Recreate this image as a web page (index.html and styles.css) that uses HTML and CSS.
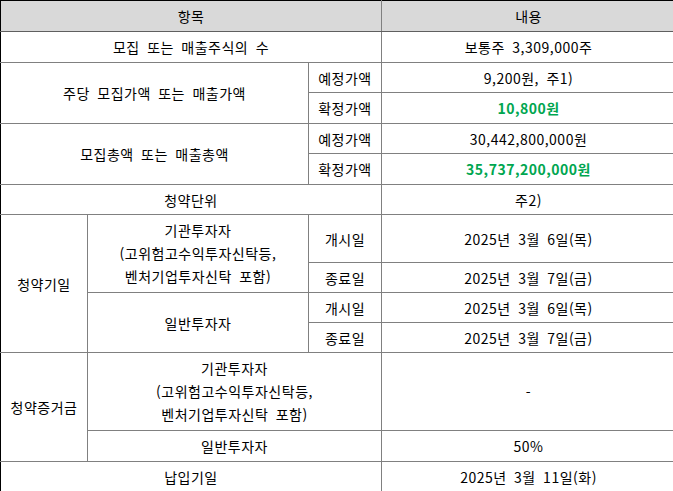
FILE: index.html
```html
<!DOCTYPE html>
<html lang="ko">
<head>
<meta charset="utf-8">
<link rel="stylesheet" href="styles.css">
</head>
<body>
<div class="wrap">
<table class="info">
  <colgroup>
    <col class="c1"><col class="c2"><col class="c3"><col class="c4">
  </colgroup>
  <tr class="h31 head">
    <th colspan="3">항목</th>
    <th>내용</th>
  </tr>
  <tr class="h31">
    <td colspan="3">모집 또는 매출주식의 수</td>
    <td>보통주 3,309,000주</td>
  </tr>
  <tr class="h30">
    <td colspan="2" rowspan="2">주당 모집가액 또는 매출가액</td>
    <td>예정가액</td>
    <td>9,200원, 주1)</td>
  </tr>
  <tr class="h31">
    <td>확정가액</td>
    <td class="green">10,800원</td>
  </tr>
  <tr class="h30">
    <td colspan="2" rowspan="2">모집총액 또는 매출총액</td>
    <td>예정가액</td>
    <td>30,442,800,000원</td>
  </tr>
  <tr class="h31">
    <td>확정가액</td>
    <td class="green">35,737,200,000원</td>
  </tr>
  <tr class="h30">
    <td colspan="3">청약단위</td>
    <td>주2)</td>
  </tr>
  <tr class="h48">
    <td rowspan="4">청약기일</td>
    <td rowspan="2" class="multi">기관투자자<br>(고위험고수익투자신탁등,<br>벤처기업투자신탁 포함)</td>
    <td>개시일</td>
    <td>2025년 3월 6일(목)</td>
  </tr>
  <tr class="h30">
    <td>종료일</td>
    <td>2025년 3월 7일(금)</td>
  </tr>
  <tr class="h30">
    <td rowspan="2">일반투자자</td>
    <td>개시일</td>
    <td>2025년 3월 6일(목)</td>
  </tr>
  <tr class="h30">
    <td>종료일</td>
    <td>2025년 3월 7일(금)</td>
  </tr>
  <tr class="h78">
    <td rowspan="2">청약증거금</td>
    <td colspan="2" class="multi">기관투자자<br>(고위험고수익투자신탁등,<br>벤처기업투자신탁 포함)</td>
    <td>-</td>
  </tr>
  <tr class="h31">
    <td colspan="2">일반투자자</td>
    <td>50%</td>
  </tr>
  <tr class="h31">
    <td colspan="3">납입기일</td>
    <td>2025년 3월 11일(화)</td>
  </tr>
</table>
</div>
</body>
</html>
```
FILE: styles.css
```css
html, body {
  margin: 0;
  padding: 0;
  overflow: hidden;
  background: #ffffff;
}
.wrap {
  width: 673px;
  height: 491px;
  overflow: hidden;
}
.info {
  border-collapse: collapse;
  table-layout: fixed;
  width: 675px;
  font-family: "Noto Sans CJK KR", "Noto Sans", sans-serif;
  font-size: 14px;
  color: #000;
  border-top: 1px solid #000;
  border-left: 1px solid #000;
}
.c1 { width: 87px; }
.c2 { width: 221px; }
.c3 { width: 73px; }
.c4 { width: 294px; }
.info th, .info td {
  border: 1px solid #808080;
  padding: 0;
  text-align: center;
  vertical-align: middle;
  font-weight: normal;
  line-height: 16px;
  letter-spacing: 0.5px;
  word-spacing: 3px;
  overflow: hidden;
  white-space: nowrap;
}
.info tr:first-child th { border-top: 1px solid #000; }
.info tr > :first-child { border-left: 1px solid #000; }
.info .head th {
  background: #d9d9d9;
  border-bottom-color: #5f5f5f;
}
.info td.multi { line-height: 23px; }
.info td.green {
  color: #00a650;
  font-weight: bold;
}
.h30 { height: 30px; }
.h31 { height: 31px; }
.h48 { height: 48px; }
.h78 { height: 78px; }
```
